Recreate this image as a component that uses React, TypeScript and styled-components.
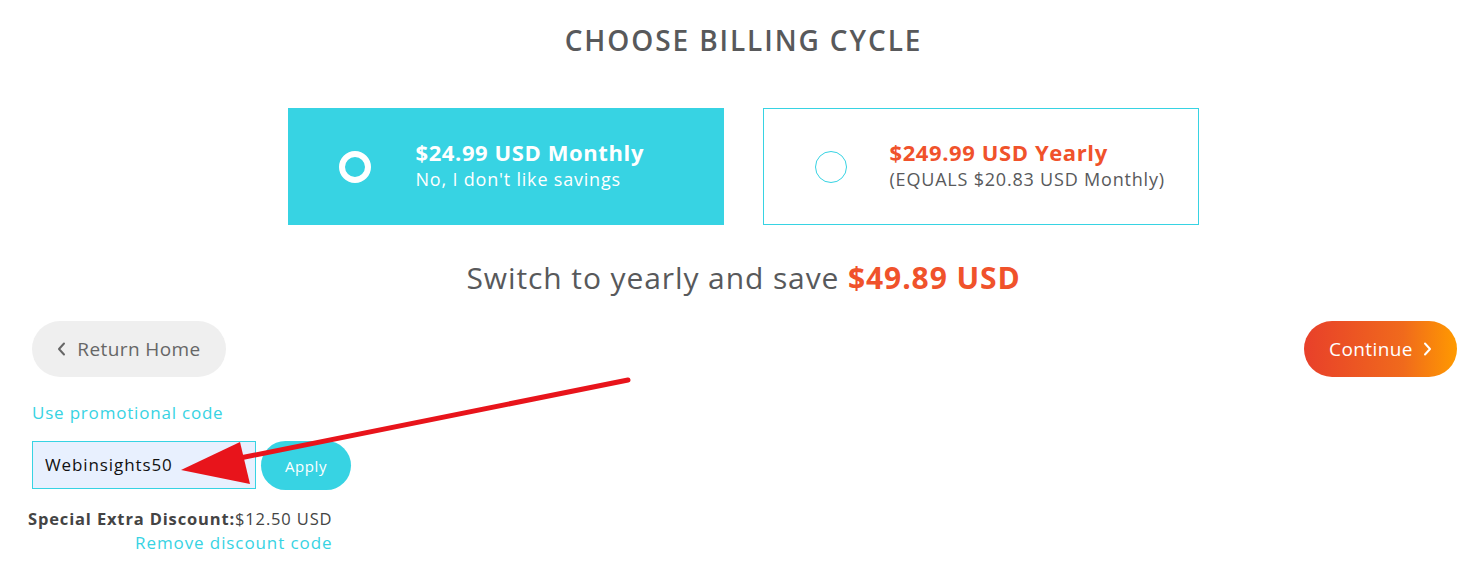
import React from 'react'
import styled, { createGlobalStyle } from 'styled-components'

const TEAL = '#37d3e3'
const ORANGE = '#f0522b'

const GlobalStyle = createGlobalStyle`
  body {
    margin: 0;
    background: #fff;
    font-family: 'Open Sans', 'Noto Sans', sans-serif;
  }
`

const Page = styled.div`
  position: relative;
  width: 1481px;
  height: 578px;
  overflow: hidden;
  padding-top: 23px;
  box-sizing: border-box;
`

const Title = styled.h1`
  margin: 0 0 0 6px;
  text-align: center;
  font-size: 28px;
  line-height: 34px;
  font-weight: 600;
  letter-spacing: 1.9px;
  color: #58595b;
`

const Cards = styled.div`
  display: flex;
  justify-content: center;
  gap: 39px;
  margin: 51px 0 0 5px;
`

const Card = styled.div<{ $active?: boolean }>`
  width: 436px;
  height: 117px;
  box-sizing: border-box;
  display: flex;
  align-items: center;
  padding-left: ${(p) => (p.$active ? 50 : 51)}px;
  background: ${(p) => (p.$active ? TEAL : '#fff')};
  border: 1px solid ${TEAL};
`

const Radio = styled.span<{ $active?: boolean }>`
  width: 32px;
  height: 32px;
  box-sizing: border-box;
  border-radius: 50%;
  border: ${(p) => (p.$active ? '6px solid #fff' : `1px solid ${TEAL}`)};
  flex-shrink: 0;
  margin-right: ${(p) => (p.$active ? 45 : 43)}px;
`

const PlanText = styled.div`
  display: flex;
  flex-direction: column;
  margin-top: -3px;
`

const PlanName = styled.span<{ $active?: boolean }>`
  font-size: 22px;
  line-height: 28px;
  font-weight: 700;
  letter-spacing: 0.6px;
  color: ${(p) => (p.$active ? '#fff' : ORANGE)};
`

const PlanSub = styled.span<{ $active?: boolean }>`
  font-size: 18px;
  line-height: 26px;
  letter-spacing: 0.8px;
  color: ${(p) => (p.$active ? '#fff' : '#58595b')};
`

const Save = styled.div`
  margin: 35px 0 0 6px;
  text-align: center;
  font-size: 30px;
  line-height: 36px;
  letter-spacing: 0.9px;
  color: #58595b;
  b {
    color: ${ORANGE};
    font-weight: 700;
  }
`

const NavRow = styled.div`
  display: flex;
  justify-content: space-between;
  margin-top: 25px;
  padding: 0 24px 0 32px;
`

const Pill = styled.button<{ $primary?: boolean }>`
  height: 56px;
  border: none;
  border-radius: 28px;
  font-family: inherit;
  font-size: 19px;
  letter-spacing: 0.4px;
  display: flex;
  align-items: center;
  gap: ${(p) => (p.$primary ? 10 : 11)}px;
  cursor: pointer;
  padding: 0;
  width: ${(p) => (p.$primary ? 153 : 194)}px;
  justify-content: center;
  color: ${(p) => (p.$primary ? '#fff' : '#666')};
  background: ${(p) =>
    p.$primary ? 'linear-gradient(90deg, #e8402a 0%, #f06a1c 65%, #ff9a00 100%)' : '#efefef'};
`

const Promo = styled.div`
  padding-left: 32px;
  margin-top: 24px;
`

const PromoLink = styled.a`
  display: block;
  color: ${TEAL};
  font-size: 17px;
  line-height: 24px;
  letter-spacing: 0.8px;
  text-decoration: none;
`

const CodeRow = styled.div`
  display: flex;
  align-items: center;
  gap: 5px;
  margin-top: 14px;
`

const CodeInput = styled.input`
  width: 224px;
  height: 48px;
  box-sizing: border-box;
  border: 1px solid ${TEAL};
  background: #e8f0fe;
  padding: 0 12px;
  font-family: inherit;
  font-size: 17px;
  letter-spacing: 0.9px;
  color: #111;
  outline: none;
`

const ApplyButton = styled.button`
  width: 90px;
  height: 49px;
  border: none;
  border-radius: 25px;
  background: ${TEAL};
  color: #fff;
  font-family: inherit;
  font-size: 15px;
  letter-spacing: 0.6px;
  margin-top: 2px;
`

const Discount = styled.div`
  display: inline-flex;
  flex-direction: column;
  align-items: flex-end;
  margin: 17px 0 0 -4px;
`

const DiscountLine = styled.div`
  font-size: 16.5px;
  line-height: 24px;
  letter-spacing: 0.85px;
  color: #444;
  b {
    font-weight: 700;
  }
`

const RemoveLink = styled.a`
  font-size: 17px;
  line-height: 24px;
  letter-spacing: 0.9px;
  color: ${TEAL};
  text-decoration: none;
`

const ArrowLayer = styled.svg`
  position: absolute;
  left: 0;
  top: 0;
  pointer-events: none;
`

const Chevron = ({ dir }: { dir: 'left' | 'right' }) => (
  <svg width="9" height="14" viewBox="0 0 9 14">
    <path
      d={dir === 'left' ? 'M7 1.5 L2 7 L7 12.5' : 'M2 1.5 L7 7 L2 12.5'}
      fill="none"
      stroke="currentColor"
      strokeWidth="2"
      strokeLinecap="round"
      strokeLinejoin="round"
    />
  </svg>
)

export default function App() {
  return (
    <Page>
      <GlobalStyle />
      <Title>CHOOSE BILLING CYCLE</Title>
      <Cards>
        <Card $active>
          <Radio $active />
          <PlanText>
            <PlanName $active>$24.99 USD Monthly</PlanName>
            <PlanSub $active>No, I don't like savings</PlanSub>
          </PlanText>
        </Card>
        <Card>
          <Radio />
          <PlanText>
            <PlanName>$249.99 USD Yearly</PlanName>
            <PlanSub>(EQUALS $20.83 USD Monthly)</PlanSub>
          </PlanText>
        </Card>
      </Cards>
      <Save>
        Switch to yearly and save <b>$49.89 USD</b>
      </Save>
      <NavRow>
        <Pill>
          <Chevron dir="left" />
          Return Home
        </Pill>
        <Pill $primary>
          Continue
          <Chevron dir="right" />
        </Pill>
      </NavRow>
      <Promo>
        <PromoLink href="#">Use promotional code</PromoLink>
        <CodeRow>
          <CodeInput defaultValue="Webinsights50" />
          <ApplyButton>Apply</ApplyButton>
        </CodeRow>
        <Discount>
          <DiscountLine>
            <b>Special Extra Discount:</b>$12.50 USD
          </DiscountLine>
          <RemoveLink href="#">Remove discount code</RemoveLink>
        </Discount>
      </Promo>
      <ArrowLayer width="1481" height="578" viewBox="0 0 1481 578">
        <line x1="628" y1="380" x2="235" y2="459" stroke="#e8141b" strokeWidth="5" strokeLinecap="round" />
        <polygon points="181,470 240,442 250,484" fill="#e8141b" />
      </ArrowLayer>
    </Page>
  )
}
